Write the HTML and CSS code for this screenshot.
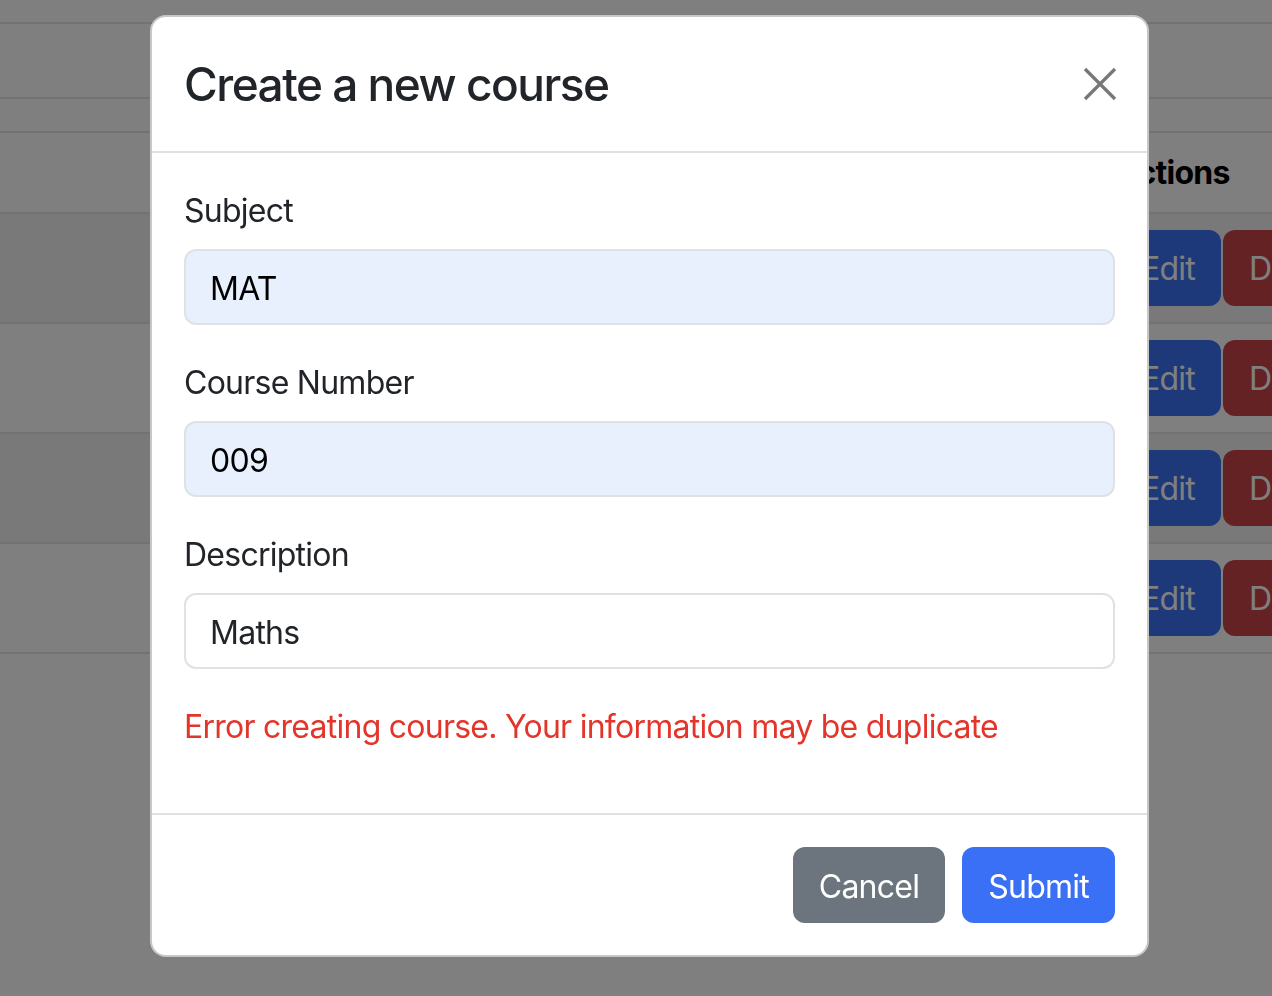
FILE: index.html
```html
<!DOCTYPE html>
<html lang="en">
<head>
<meta charset="utf-8">
<title>Create a new course</title>
<link rel="stylesheet" href="styles.css">
</head>
<body>
<div class="page">
  <div class="row row-a"></div>
  <div class="row row-b"></div>
  <div class="row row-head">
    <div class="spacer"></div>
    <div class="actions"><span class="th">Actions</span></div>
  </div>
  <div class="row row-body striped">
    <div class="spacer"></div>
    <div class="actions"><span class="btn btn-edit">Edit</span><span class="btn btn-del">Delete</span></div>
  </div>
  <div class="row row-body">
    <div class="spacer"></div>
    <div class="actions"><span class="btn btn-edit">Edit</span><span class="btn btn-del">Delete</span></div>
  </div>
  <div class="row row-body striped">
    <div class="spacer"></div>
    <div class="actions"><span class="btn btn-edit">Edit</span><span class="btn btn-del">Delete</span></div>
  </div>
  <div class="row row-body last">
    <div class="spacer"></div>
    <div class="actions"><span class="btn btn-edit">Edit</span><span class="btn btn-del">Delete</span></div>
  </div>
</div>

<div class="backdrop"></div>

<div class="modal">
  <div class="modal-header">
    <h5 class="modal-title">Create a new course</h5>
    <span class="btn-close" aria-label="Close">
      <svg width="36" height="36" viewBox="0 0 36 36"><path d="M3 3 L33 33 M33 3 L3 33" stroke="#777" stroke-width="3.2" stroke-linecap="butt" fill="none"/></svg>
    </span>
  </div>
  <div class="modal-body">
    <div class="group">
      <label class="label">Subject</label>
      <input class="input autofill" type="text" value="MAT">
    </div>
    <div class="group">
      <label class="label">Course Number</label>
      <input class="input autofill" type="text" value="009">
    </div>
    <div class="group">
      <label class="label">Description</label>
      <input class="input" type="text" value="Maths">
    </div>
    <div class="error">Error creating course. Your information may be duplicate</div>
  </div>
  <div class="modal-footer">
    <span class="mbtn mbtn-secondary">Cancel</span>
    <span class="mbtn mbtn-primary">Submit</span>
  </div>
</div>
</body>
</html>
```

FILE: styles.css
```css
html, body {
  margin: 0;
  padding: 0;
  height: 100%;
  overflow: hidden;
  background: #fff;
}

body {
  font-family: Inter, "Noto Sans", sans-serif;
  color: #212529;
  font-size: 32px;
  letter-spacing: -0.75px;
}

.page {
  padding-top: 22px;
  width: 1500px;
}

.row {
  display: flex;
  align-items: center;
  border-top: 2px solid #e4e4e4;
}

.row-a { height: 73px; }
.row-b { height: 32px; }
.row-head { height: 79px; }
.row-body { height: 108px; }
.row-body.last { border-bottom: 2px solid #e4e4e4; }
.striped { background: #f2f2f2; }

.spacer {
  flex: 0 0 1099px;
}

.actions {
  display: flex;
  align-items: center;
  gap: 2px;
  padding: 0 16px;
}

.th {
  font-weight: 700;
  color: #000;
  font-size: 32px;
}

.btn {
  display: inline-block;
  color: #fff;
  font-size: 32px;
  line-height: 48px;
  padding: 13px 24px 11px;
  border: 2px solid transparent;
  border-radius: 12px;
}

.btn-edit { background: #3a72f5; }
.btn-del { background: #ca4549; }

.backdrop {
  position: fixed;
  inset: 0;
  background: rgba(0, 0, 0, 0.5);
}

.modal {
  position: fixed;
  top: 15px;
  left: 150px;
  width: 999px;
  box-sizing: border-box;
  background: #fff;
  border: 2px solid rgba(0, 0, 0, 0.22);
  border-radius: 16px;
  display: flex;
  flex-direction: column;
}

.modal-header {
  display: flex;
  align-items: center;
  padding: 32px 32px 31px;
  border-bottom: 2px solid #dee2e6;
}

.modal-title {
  margin: 0;
  flex: 1;
  font-size: 46px;
  font-weight: 500;
  line-height: 71px;
  letter-spacing: -1.5px;
  color: #212529;
}

.btn-close {
  display: flex;
  width: 36px;
  height: 36px;
  margin-right: -3px;
  margin-top: -2px;
}

.modal-body {
  padding: 32px;
}

.group {
  display: flex;
  flex-direction: column;
  margin-bottom: 32px;
}

.label {
  font-size: 32px;
  line-height: 48px;
  padding-top: 2px;
  margin-bottom: 14px;
  color: #212529;
}

.input {
  box-sizing: border-box;
  height: 76px;
  width: 100%;
  font-family: Inter, "Noto Sans", sans-serif;
  font-size: 32px;
  letter-spacing: -0.75px;
  line-height: 48px;
  padding: 13px 24px 11px;
  border: 2px solid #dee2e6;
  border-radius: 12px;
  background: #fff;
  color: #212529;
  outline: none;
}

.input.autofill {
  background: #e8f0fe;
  color: #000;
}

.error {
  color: #e4352b;
  font-size: 32px;
  line-height: 48px;
  padding-top: 2px;
  margin-bottom: 30px;
}

.modal-footer {
  display: flex;
  justify-content: flex-end;
  gap: 17px;
  padding: 32px;
  border-top: 2px solid #dee2e6;
}

.mbtn {
  display: inline-block;
  color: #fff;
  font-size: 32px;
  line-height: 48px;
  padding: 14px 24px 10px;
  border: 2px solid transparent;
  border-radius: 12px;
}

.mbtn-secondary { background: #6c757d; }
.mbtn-primary { background: #3a70f5; }
```
